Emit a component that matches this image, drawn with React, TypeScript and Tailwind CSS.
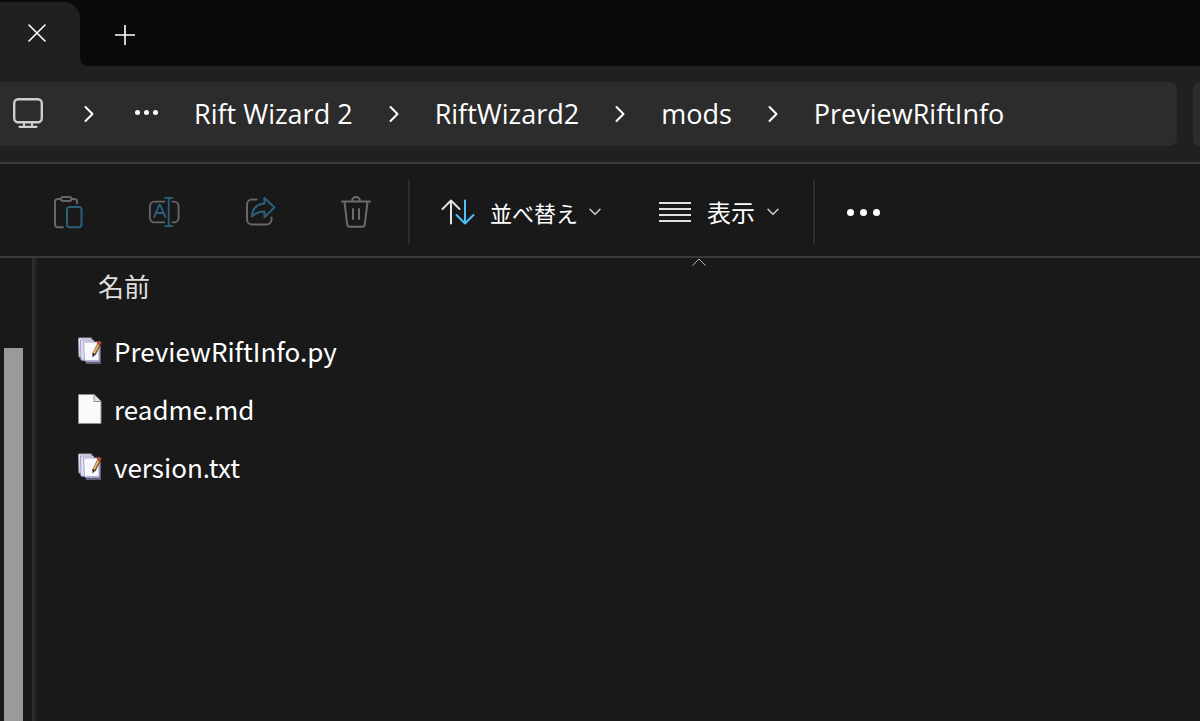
import type { ReactNode } from "react";

const uiFont = "font-['Open_Sans','Noto_Sans_CJK_JP',sans-serif]";
const jpFont = "font-['Noto_Sans_CJK_JP',sans-serif]";

const CloseIcon = () => (
  <svg width="18" height="18" viewBox="0 0 18 18" fill="none" stroke="#fff" strokeWidth="1.6" strokeLinecap="round">
    <path d="M1 1l16 16M17 1L1 17" />
  </svg>
);

const PlusIcon = () => (
  <svg width="20" height="20" viewBox="0 0 20 20" fill="none" stroke="#fff" strokeWidth="1.6">
    <path d="M10 0v20M0 10h20" />
  </svg>
);

const MonitorIcon = () => (
  <svg width="32" height="32" viewBox="0 0 32 32" fill="none" stroke="#cfcfcf" strokeWidth="2.4" strokeLinecap="round">
    <rect x="2.2" y="1.2" width="27.6" height="23" rx="4" />
    <path d="M12 25v4M20 25v4M7.5 28.8h17" strokeWidth="2.2" />
  </svg>
);

const CrumbChevron = () => (
  <svg width="10" height="18" viewBox="0 0 10 18" fill="none" stroke="#fff" strokeWidth="2" strokeLinecap="round" strokeLinejoin="round">
    <path d="M1.5 2L8.5 9l-7 7" />
  </svg>
);

const DownChevron = () => (
  <svg width="12" height="8" viewBox="0 0 12 8" fill="none" stroke="#cfcfcf" strokeWidth="1.5" strokeLinecap="round" strokeLinejoin="round">
    <path d="M1 1.2l5 5 5-5" />
  </svg>
);

const PasteIcon = () => (
  <svg width="32" height="34" viewBox="0 0 32 34" fill="none" strokeWidth="2" strokeLinecap="round">
    <g stroke="#676767">
      <path d="M9 4H5.600A2.600 2.600 0 0 0 3 6.600v23a2.600 2.600 0 0 0 2.600 2.600H11M19 4h3.500a2.600 2.600 0 0 1 2.600 2.600v1.600" />
      <rect x="9" y="2" width="10.500" height="4" rx="2" />
    </g>
    <rect x="15" y="12" width="14.500" height="20.200" rx="2.800" stroke="#2c5f7c" />
  </svg>
);

const RenameIcon = () => (
  <svg width="34" height="34" viewBox="0 0 34 34" fill="none" strokeWidth="2" strokeLinecap="round">
    <path d="M17.500 6H7a5 5 0 0 0-5 5v12a5 5 0 0 0 5 5h10.500M26 6h1.500a5 5 0 0 1 5 5v12a5 5 0 0 1-5 5H26" stroke="#676767" />
    <path d="M6.500 22.500L12 9.500h1l5.500 13M8.500 18h8M22 2v30M18 2h8M18 32h8" stroke="#2c5f7c" />
  </svg>
);

const ShareIcon = () => (
  <svg width="32" height="32" viewBox="0 0 32 32" fill="none" strokeWidth="2" strokeLinejoin="round" strokeLinecap="round">
    <path d="M12.500 4.500H8a5 5 0 0 0-5 5v15a5 5 0 0 0 5 5h14.500a5 5 0 0 0 5-5V22.500" stroke="#676767" />
    <path d="M20.500 3l10 9.500-10 9.500v-5.500c-5.500 0-9 1.500-12.500 5C8.500 14 12.500 9 20.500 8.500z" stroke="#2c5f7c" />
  </svg>
);

const TrashIcon = () => (
  <svg width="32" height="34" viewBox="0 0 32 34" fill="none" stroke="#6c6c6c" strokeWidth="2" strokeLinecap="round">
    <path d="M2 6.500h28M12 6a4 4 0 0 1 8 0M4.500 7l2.600 22a3 3 0 0 0 3 2.800h11.800a3 3 0 0 0 3-2.800L27.500 7M13 14v10M19 14v10" />
  </svg>
);

const SortIcon = () => (
  <svg width="34" height="26" viewBox="0 0 34 26" fill="none" strokeWidth="2" strokeLinecap="round" strokeLinejoin="round">
    <path d="M10 24.500v-23M1.500 10L10 1.500l8.500 8.500" stroke="#e3e3e3" />
    <path d="M24 1.500v23M15.500 16l8.500 8.500 8.500-8.500" stroke="#4cc2ff" />
  </svg>
);

const ListIcon = () => (
  <svg width="32" height="20" viewBox="0 0 32 20" fill="#e0e0e0">
    <rect y="0" width="32" height="2" />
    <rect y="6" width="32" height="2" />
    <rect y="12" width="32" height="2" />
    <rect y="18" width="32" height="2" />
  </svg>
);

// Stacked pages with a pencil, used for files bound to the text editor
const NotesIcon = () => (
  <svg width="24" height="28" viewBox="0 0 24 28">
    <path d="M8 9h15v18H8z" fill="#5f5f78" />
    <path d="M0.500 1h13v19.500L1 20z" fill="#f0eefa" stroke="#9c9cb8" />
    <path d="M2.500 3h13v21l-12.500-1z" fill="#e4e2f5" stroke="#a0a0c4" />
    <path d="M20 7h1.500v17.500H20z" fill="#c0c0e2" />
    <path d="M5.500 5h13.500l2 3v15.500H6.500z" fill="#f9f8ff" stroke="#a6a6cc" />
    <path d="M7 24h14" stroke="#b4b4e0" strokeWidth="1.500" />
    <path d="M16 17.500L21 7" stroke="#6b4a2a" strokeWidth="3.600" />
    <path d="M16 16.500L20.500 7.500" stroke="#eab765" strokeWidth="1.800" />
    <path d="M20.500 7.500L22 4.500" stroke="#cf4530" strokeWidth="3.600" />
    <path d="M14.300 16l3.200 1.500-3 3z" fill="#2e2e3a" />
  </svg>
);

const BlankFileIcon = () => (
  <svg width="24" height="30" viewBox="0 0 24 30">
    <path d="M0.500 0.500h15.500l7 7v22H0.500z" fill="#fafafa" stroke="#8f8f8f" />
    <path d="M16 0.500v7h7" fill="#e4e4e4" stroke="#8f8f8f" />
  </svg>
);

const Dots = ({ big }: { big?: boolean }) => (
  <span className={big ? "flex gap-[6px]" : "flex gap-1"}>
    {[0, 1, 2].map((i) => (
      <span key={i} className={big ? "size-[7px] rounded-full bg-white" : "size-[5px] rounded-full bg-white"} />
    ))}
  </span>
);

const crumbs = ["Rift Wizard 2", "RiftWizard2", "mods", "PreviewRiftInfo"];

const actions: { label: string; icon: ReactNode }[] = [
  { label: "貼り付け", icon: <PasteIcon /> },
  { label: "名前の変更", icon: <RenameIcon /> },
  { label: "共有", icon: <ShareIcon /> },
  { label: "削除", icon: <TrashIcon /> },
];

const files = [
  { name: "PreviewRiftInfo.py", icon: <NotesIcon /> },
  { name: "readme.md", icon: <BlankFileIcon /> },
  { name: "version.txt", icon: <NotesIcon /> },
];

const TabStrip = () => (
  <div className="flex h-[66px] bg-[#0a0a0a]">
    <div className="mt-[2px] flex w-20 shrink-0 items-center rounded-tr-2xl bg-[#202020] pb-[2px] pl-7">
      <button aria-label="タブを閉じる">
        <CloseIcon />
      </button>
    </div>
    <div className="flex-1 bg-[#202020]">
      <div className="flex h-full items-center rounded-bl-lg bg-[#0a0a0a] pt-1 pl-[35px]">
        <button aria-label="新しいタブ">
          <PlusIcon />
        </button>
      </div>
    </div>
  </div>
);

const AddressBar = () => (
  <div className="flex gap-4 border-b-2 border-[#3a3a3a] bg-[#202020] py-4">
    <nav className="flex h-16 flex-1 items-center rounded-r-lg bg-[#2c2c2c] pl-3">
      <button aria-label="PC">
        <MonitorIcon />
      </button>
      <span className="ml-10">
        <CrumbChevron />
      </span>
      <button aria-label="その他の場所" className="ml-[41px] pb-1">
        <Dots />
      </button>
      <ol className="ml-9 flex items-center gap-9">
        {crumbs.map((crumb, i) => (
          <li key={crumb} className="flex items-center gap-9">
            {i > 0 && <CrumbChevron />}
            <a href="#" className="text-[27px] leading-8 whitespace-nowrap text-white">
              {crumb}
            </a>
          </li>
        ))}
      </ol>
    </nav>
    <div className="w-[7px] rounded-l-lg bg-[#2c2c2c]" />
  </div>
);

const Toolbar = () => (
  <div className={`flex h-[94px] items-center border-b-2 border-[#3a3a3a] pt-1 pl-[52px] text-white ${jpFont}`}>
    <div className="flex gap-16">
      {actions.map(({ label, icon }) => (
        <button key={label} aria-label={label} disabled className="flex w-8 justify-center">
          {icon}
        </button>
      ))}
    </div>
    <div className="ml-9 h-16 w-[2px] bg-[#2e2e2e]" />
    <button className="ml-[31px] flex items-center">
      <SortIcon />
      <span className="ml-[15px] text-[22px] leading-8">並べ替え</span>
      <span className="ml-[11px]">
        <DownChevron />
      </span>
    </button>
    <button className="ml-[58px] flex items-center">
      <ListIcon />
      <span className="ml-4 text-[24px] leading-8">表示</span>
      <span className="ml-3">
        <DownChevron />
      </span>
    </button>
    <div className="ml-[34px] h-16 w-[2px] bg-[#2e2e2e]" />
    <button aria-label="もっと見る" className="ml-8">
      <Dots big />
    </button>
  </div>
);

const FileList = () => (
  <main className={`relative flex-1 ${jpFont}`}>
    <svg className="absolute top-0 left-[654px]" width="14" height="8" viewBox="0 0 14 8" fill="none" stroke="#b5b5b5">
      <path d="M0.500 7.500L7 1l6.500 6.500" />
    </svg>
    <table className="w-full text-left">
      <thead>
        <tr>
          <th className="h-16 pb-2 pl-[60px] text-[26px] leading-8 font-normal text-[#dedede]">名前</th>
        </tr>
      </thead>
      <tbody>
        {files.map(({ name, icon }) => (
          <tr key={name}>
            <td className="h-[58px] pl-10">
              <div className="flex items-center gap-3 text-[26px] leading-8 text-white">
                {icon}
                <span>{name}</span>
              </div>
            </td>
          </tr>
        ))}
      </tbody>
    </table>
  </main>
);

const App = () => {
  return (
    <div className={`flex min-h-screen flex-col overflow-hidden bg-[#191919] ${uiFont}`}>
      <TabStrip />
      <AddressBar />
      <Toolbar />
      <div className="flex flex-1">
        <aside className="flex w-8 shrink-0 pt-[90px] pl-1">
          <div className="w-[19px] bg-[#9a9a9a]" />
        </aside>
        <div className="w-[6px] shrink-0 border-l-3 border-[#2c2c2c] bg-[#1f1f1f]" />
        <FileList />
      </div>
    </div>
  );
};

export default App;
